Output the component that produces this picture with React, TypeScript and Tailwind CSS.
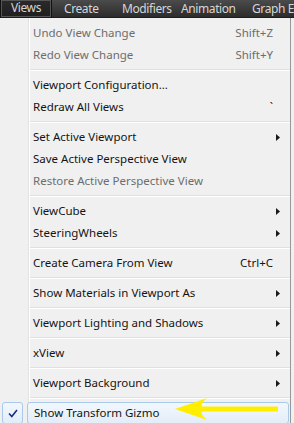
type Item =
  | { kind: "sep" }
  | { kind: "item"; label: string; shortcut?: string; sub?: boolean; disabled?: boolean };

const items: Item[] = [
  { kind: "item", label: "Undo View Change", shortcut: "Shift+Z", disabled: true },
  { kind: "item", label: "Redo View Change", shortcut: "Shift+Y", disabled: true },
  { kind: "sep" },
  { kind: "item", label: "Viewport Configuration..." },
  { kind: "item", label: "Redraw All Views", shortcut: "`" },
  { kind: "sep" },
  { kind: "item", label: "Set Active Viewport", sub: true },
  { kind: "item", label: "Save Active Perspective View" },
  { kind: "item", label: "Restore Active Perspective View", disabled: true },
  { kind: "sep" },
  { kind: "item", label: "ViewCube", sub: true },
  { kind: "item", label: "SteeringWheels", sub: true },
  { kind: "sep" },
  { kind: "item", label: "Create Camera From View", shortcut: "Ctrl+C" },
  { kind: "sep" },
  { kind: "item", label: "Show Materials in Viewport As", sub: true },
  { kind: "sep" },
  { kind: "item", label: "Viewport Lighting and Shadows", sub: true },
  { kind: "sep" },
  { kind: "item", label: "xView", sub: true },
  { kind: "sep" },
  { kind: "item", label: "Viewport Background", sub: true },
  { kind: "sep" },
];

function SubArrow() {
  return (
    <svg width="4" height="7" viewBox="0 0 4 7" className="shrink-0">
      <path d="M0 0 L4 3.5 L0 7 Z" fill="#1a1a1a" />
    </svg>
  );
}

export default function App() {
  return (
    <div
      className="w-[294px] h-[423px] overflow-hidden bg-[#f0f0f0] relative"
      style={{ fontFamily: '"Noto Sans", "Open Sans", sans-serif' }}
    >
      {/* Menu bar */}
      <div className="h-[18px] flex items-center text-[12px] tracking-[-0.4px] text-[#d6d6d6] bg-gradient-to-b from-[#4b4b4b] to-[#2c2c2c] border-b border-[#1c1c1c] overflow-hidden">
        <div className="h-[18px] w-[52px] shrink-0 flex items-center justify-center bg-gradient-to-b from-[#2a2a2a] to-[#1f1f1f] border border-[#111] border-t-0 shadow-[inset_0_0_0_1px_#555]">
          Views
        </div>
        <div className="w-[70px] shrink-0 pl-[12px]">Create</div>
        <div className="w-[59px] shrink-0">Modifiers</div>
        <div className="w-[71px] shrink-0">Animation</div>
        <div className="shrink-0 whitespace-nowrap">Graph Editors</div>
      </div>

      {/* Menu */}
      <div className="w-[291px] bg-[#f0f0f0] border-r border-[#979797] pt-[4px] relative h-[405px]">
        <div className="absolute left-[28px] top-0 bottom-0 w-[2px] border-l border-[#e2e3e3] border-r border-r-white" />
        {items.map((it, i) =>
          it.kind === "sep" ? (
            <div key={i} className="h-[8px] flex items-center pl-[30px]">
              <div className="flex-1 h-[2px] border-t border-[#e0e0e0] border-b border-b-white" />
            </div>
          ) : (
            <div
              key={i}
              className={`h-[22px] flex items-center text-[11.5px] pl-[33px] pr-[10px] ${
                it.disabled ? "text-[#6d6d6d]" : "text-[#141414]"
              }`}
            >
              <span className="flex-1 whitespace-nowrap">{it.label}</span>
              {it.shortcut && <span className="mr-[7px] whitespace-nowrap">{it.shortcut}</span>}
              {it.sub && <SubArrow />}
            </div>
          )
        )}
        {/* Checked, hovered row */}
        <div className="h-[22px] flex items-stretch text-[11.5px] text-[#141414] pl-[2px] relative">
          <div className="w-[21px] flex items-center justify-center rounded-[3px] border border-[#a8c9ea] bg-gradient-to-b from-[#f2f7fd] to-[#e3edf8]">
            <svg width="10" height="9" viewBox="0 0 10 9">
              <path d="M1 4.5 L3.8 7.5 L9 1" stroke="#1b2c87" strokeWidth="1.6" fill="none" />
            </svg>
          </div>
          <div className="flex-1 ml-[4px] mr-[1px] flex items-center pl-[6px] rounded-[3px] border border-[#a8c9ea] bg-gradient-to-b from-[#f2f7fd] to-[#e3edf8]">
            <span className="whitespace-nowrap">Show Transform Gizmo</span>
          </div>
          <svg width="106" height="24" viewBox="0 0 106 24" className="absolute left-[174px] top-[-5px]">
            <path d="M1 12 L33 1 Q26 7 28 9.5 L104 9.5 L104 14.5 L28 14.5 Q26 17 33 23 Z" fill="#ffee00" />
          </svg>
        </div>
      </div>
    </div>
  );
}
